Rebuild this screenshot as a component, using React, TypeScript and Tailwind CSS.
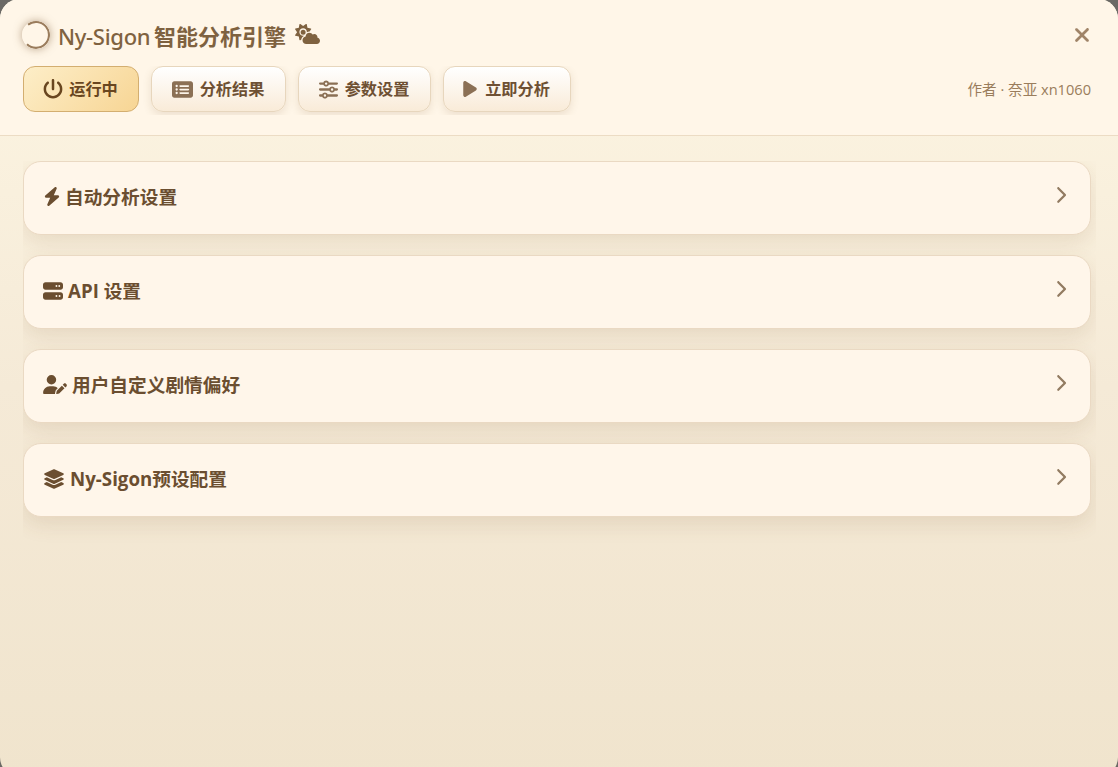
import { useState } from 'react'
import type { ReactNode } from 'react'
import {
  FaBolt,
  FaChevronRight,
  FaCloudSun,
  FaLayerGroup,
  FaPlay,
  FaPowerOff,
  FaRectangleList,
  FaServer,
  FaSliders,
  FaUserPen,
  FaXmark,
} from 'react-icons/fa6'

interface Section {
  id: string
  title: string
  icon: ReactNode
  gap: string
}

const sections: Section[] = [
  { id: 'auto', title: '自动分析设置', icon: <FaBolt className="w-[18px] h-[19px]" />, gap: 'gap-[4px]' },
  { id: 'api', title: 'API 设置', icon: <FaServer className="size-5" />, gap: 'gap-[5px]' },
  { id: 'user', title: '用户自定义剧情偏好', icon: <FaUserPen className="w-[24px] h-[19px] mr-px" />, gap: 'gap-[4px]' },
  { id: 'preset', title: 'Ny-Sigon预设配置', icon: <FaLayerGroup className="w-[22px] h-5" />, gap: 'gap-[5px]' },
]

const tabs = [
  { label: '分析结果', width: 'w-[135px]', icon: <FaRectangleList className="size-[21px]" />, gap: 'gap-[7px]' },
  { label: '参数设置', width: 'w-[133px]', icon: <FaSliders className="w-[19px] h-[19px]" />, gap: 'gap-[7px]' },
  { label: '立即分析', width: 'w-[128px]', icon: <FaPlay className="w-[14px] h-[18px]" />, gap: 'gap-[8px]' },
]

export default function App() {
  const [running, setRunning] = useState(true)

  return (
    <div className="h-screen overflow-hidden bg-[#6b6965] font-['Open_Sans','Noto_Sans_CJK_SC',sans-serif]">
      <div className="-mt-px flex h-[778px] flex-col overflow-hidden rounded-[20px] bg-linear-to-b from-[#fdf6e3] via-[#f5ead7] to-[#f0e4cd] pt-px">
        <header className="h-[136px] shrink-0 border-b border-[#ecdcc4] bg-[#fff6e8] pl-[23px] pr-[27px]">
          {/* Title bar */}
          <div className="flex h-[66px] items-center pt-1">
            <svg viewBox="0 0 28 28" className="-ml-[1px] size-7 rounded-full shadow-[0_0_8px_rgba(120,85,45,0.5)]" fill="none">
              <circle cx="14" cy="14" r="14" fill="#fff6e8" />
              <path d="M6 3.6 A13 13 0 1 1 5 23.2" stroke="#9a7c5c" strokeWidth="2.2" />
            </svg>
            <h1 className="ml-2 flex items-center pt-px text-[22px] leading-8 text-[#7f6240]">
              <span className="w-24 whitespace-nowrap font-['Noto_Sans'] font-medium tracking-[-0.3px]">Ny-Sigon</span>
              <span className="font-bold">智能分析引擎</span>
              <FaCloudSun className="ml-[9px] mb-[4px] h-5 w-[25px]" />
            </h1>
            <button aria-label="关闭" className="-mr-[2px] ml-auto text-[#a08468]">
              <FaXmark className="size-[22px]" />
            </button>
          </div>

          {/* Toolbar */}
          <div className="flex items-center justify-between">
            <div className="flex gap-3 overflow-hidden pb-[3px] pr-2">
              <button
                onClick={() => setRunning(!running)}
                className="flex h-[46px] w-[116px] items-center justify-center gap-[6px] rounded-xl border border-[#d3ae70] bg-linear-135 from-[#fdeec8] to-[#f7d594] pr-[1px] text-[16.2px] font-bold text-[#69461f]"
              >
                <FaPowerOff className="size-5" />
                {running ? '运行中' : '已停止'}
              </button>
              {tabs.map((tab) => (
                <button
                  key={tab.label}
                  className={`flex h-[46px] items-center justify-center rounded-xl border border-[#e7d6bd] bg-linear-to-b from-white to-[#f9ebd8] pr-px text-[16.2px] font-bold text-[#6e5033] shadow-[0_3px_8px_rgba(120,85,45,0.14)] ${tab.width} ${tab.gap}`}
                >
                  <span className="text-[#8b7055]">{tab.icon}</span>
                  {tab.label}
                </button>
              ))}
            </div>
            <span className="mb-px text-[14.6px] text-[#9a7d5c]">作者 · 奈亚 xn1060</span>
          </div>
        </header>

        <main className="mt-[25px] ml-[23px] mr-[22px] flex min-h-0 flex-1 flex-col gap-5 overflow-hidden pr-[5px]">
          {sections.map((section) => (
            <section
              key={section.id}
              className="flex h-[74px] shrink-0 items-center justify-between rounded-[18px] border border-[#ead9c3] bg-[#fff6ea] pl-[19px] pr-[23px] shadow-[0_8px_20px_rgba(120,85,45,0.12)]"
            >
              <h2 className={`mb-[2px] flex items-center text-[18.7px] font-bold text-[#6b4e30] ${section.gap}`}>
                {section.icon}
                {section.title}
              </h2>
              <FaChevronRight className="mb-[6px] h-[18px] w-[13px] text-[#927b61]" />
            </section>
          ))}
        </main>
      </div>
    </div>
  )
}
